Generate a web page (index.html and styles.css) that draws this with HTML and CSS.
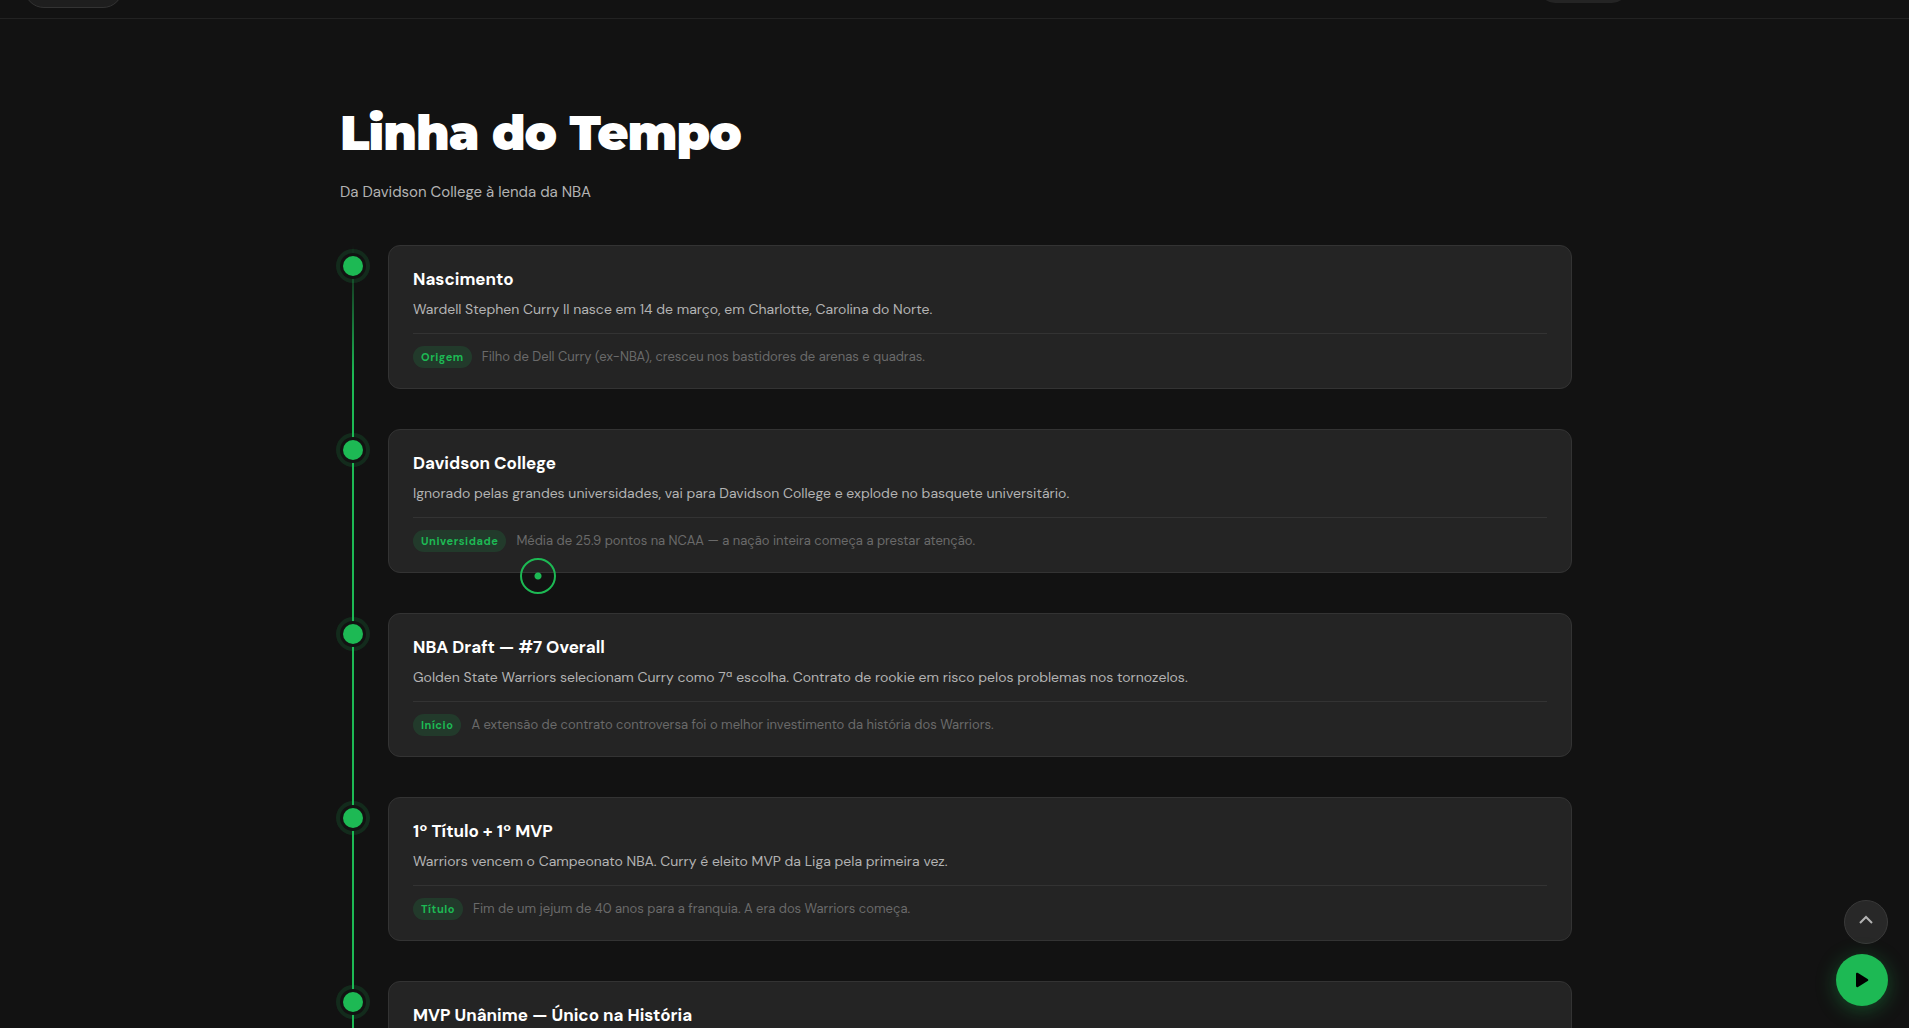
FILE: index.html
```html
<!DOCTYPE html>
<html lang="pt-BR">
<head>
    <meta charset="UTF-8">
    <title>Linha do Tempo</title>
    <link rel="stylesheet" href="styles.css">
</head>
<body>
    <header class="topbar">
        <div class="pill"></div>
        <div class="pill pill-small"></div>
    </header>

    <main class="page">
        <h1 class="title">Linha do Tempo</h1>
        <p class="subtitle">Da Davidson College à lenda da NBA</p>

        <ol class="timeline">
            <li class="item">
                <span class="dot"></span>
                <article class="card">
                    <h2 class="card-title">Nascimento</h2>
                    <p class="card-text">Wardell Stephen Curry II nasce em 14 de março, em Charlotte, Carolina do Norte.</p>
                    <div class="card-foot">
                        <span class="tag">Origem</span>
                        <span class="note">Filho de Dell Curry (ex-NBA), cresceu nos bastidores de arenas e quadras.</span>
                    </div>
                </article>
            </li>
            <li class="item">
                <span class="dot"></span>
                <article class="card">
                    <h2 class="card-title">Davidson College</h2>
                    <p class="card-text">Ignorado pelas grandes universidades, vai para Davidson College e explode no basquete universitário.</p>
                    <div class="card-foot">
                        <span class="tag">Universidade</span>
                        <span class="note">Média de 25.9 pontos na NCAA — a nação inteira começa a prestar atenção.</span>
                    </div>
                </article>
            </li>
            <li class="item">
                <span class="dot"></span>
                <article class="card">
                    <h2 class="card-title">NBA Draft — #7 Overall</h2>
                    <p class="card-text">Golden State Warriors selecionam Curry como 7ª escolha. Contrato de rookie em risco pelos problemas nos tornozelos.</p>
                    <div class="card-foot">
                        <span class="tag">Início</span>
                        <span class="note">A extensão de contrato controversa foi o melhor investimento da história dos Warriors.</span>
                    </div>
                </article>
            </li>
            <li class="item">
                <span class="dot"></span>
                <article class="card">
                    <h2 class="card-title">1º Título + 1º MVP</h2>
                    <p class="card-text">Warriors vencem o Campeonato NBA. Curry é eleito MVP da Liga pela primeira vez.</p>
                    <div class="card-foot">
                        <span class="tag">Título</span>
                        <span class="note">Fim de um jejum de 40 anos para a franquia. A era dos Warriors começa.</span>
                    </div>
                </article>
            </li>
            <li class="item">
                <span class="dot"></span>
                <article class="card">
                    <h2 class="card-title">MVP Unânime — Único na História</h2>
                </article>
            </li>
        </ol>
    </main>

    <div class="cursor"></div>

    <div class="floating">
        <button class="to-top" aria-label="Voltar ao topo">
            <svg width="16" height="16" viewBox="0 0 16 16" fill="none" stroke="currentColor" stroke-width="2">
                <path d="M2 9l6-6 6 6"/>
            </svg>
        </button>
        <button class="play" aria-label="Reproduzir">
            <svg width="16" height="16" viewBox="0 0 16 16" fill="currentColor">
                <path d="M2 2.200C2 .9 3 .6 4 1.100l9.600 5.800c.9.600.9 1.600 0 2.200L4 14.900c-1 .5-2 .2-2-1.100z"/>
            </svg>
        </button>
    </div>
</body>
</html>
```

FILE: styles.css
```css
* {
    box-sizing: border-box;
    margin: 0;
    padding: 0;
}
body {
    height: 100vh;
    overflow: hidden;
    background: #121212;
    color: #fff;
    font-family: "DM Sans", Inter, sans-serif;
}
.topbar {
    display: flex;
    justify-content: space-between;
    align-items: flex-end;
    height: 19px;
    padding: 0 281px 0 24px;
    border-bottom: 1px solid #222;
    overflow: hidden;
}
.pill {
    width: 99px;
    height: 40px;
    margin-bottom: 10px;
    background: #1e1e1e;
    border: 1px solid #333;
    border-radius: 20px;
}
.pill-small {
    width: 89px;
    height: 32px;
    margin-bottom: 15px;
    background: #242424;
    border: 0;
}
.page {
    max-width: 1235px;
    margin: 0 auto;
    padding: 84px 0 0 3px;
}
.title {
    font-family: Montserrat, Inter, sans-serif;
    font-size: 48px;
    font-weight: 900;
    letter-spacing: -1px;
    line-height: 60px;
}
.subtitle {
    margin: 16px 0 40px;
    color: #b3b3b3;
    font-size: 15px;
    line-height: 26px;
}
.timeline {
    list-style: none;
    background: linear-gradient(transparent, #1db954 130px) 12px 0 / 2px 100% no-repeat;
}
.item {
    display: grid;
    grid-template-columns: 26px 1fr;
    column-gap: 22px;
    padding-bottom: 40px;
}
.dot {
    justify-self: center;
    width: 20px;
    height: 20px;
    margin-top: 11px;
    border-radius: 50%;
    background: #1db954;
    box-shadow: 0 0 0 3px #121212, 0 0 0 7px rgba(29, 185, 84, 0.15);
}
.card {
    padding: 20px 24px;
    background: #242424;
    border: 1px solid #333;
    border-radius: 12px;
}
.card-title {
    font-size: 17px;
    font-weight: 700;
    line-height: 26px;
}
.card-text {
    margin: 6px 0 12px;
    color: #b3b3b3;
    font-size: 14px;
    line-height: 23px;
}
.card-foot {
    display: flex;
    align-items: baseline;
    gap: 10px;
    padding-top: 12px;
    border-top: 1px solid #333;
}
.tag {
    padding: 0 8px;
    background: rgba(29, 185, 84, 0.15);
    border-radius: 11px;
    color: #1db954;
    font-size: 11px;
    font-weight: 700;
    letter-spacing: 0.05em;
    line-height: 22px;
}
.note {
    color: #6a6a6a;
    font-size: 13px;
    line-height: 20px;
}
.cursor {
    position: fixed;
    left: 520px;
    top: 558px;
    width: 36px;
    height: 36px;
    border: 2px solid #1db954;
    border-radius: 50%;
    background: radial-gradient(circle, #1db954 3px, transparent 4px);
}
.floating {
    position: fixed;
    right: 21px;
    bottom: 22px;
    display: flex;
    flex-direction: column;
    align-items: flex-end;
    gap: 10px;
}
.to-top,
.play {
    display: grid;
    place-items: center;
    border: 0;
    border-radius: 50%;
}
.to-top {
    width: 44px;
    height: 44px;
    background: #282828;
    border: 1px solid #3a3a3a;
    color: #b3b3b3;
}
.play {
    width: 52px;
    height: 52px;
    background: #1db954;
    color: #000;
    box-shadow: 0 4px 20px rgba(29, 185, 84, 0.35);
}
```
